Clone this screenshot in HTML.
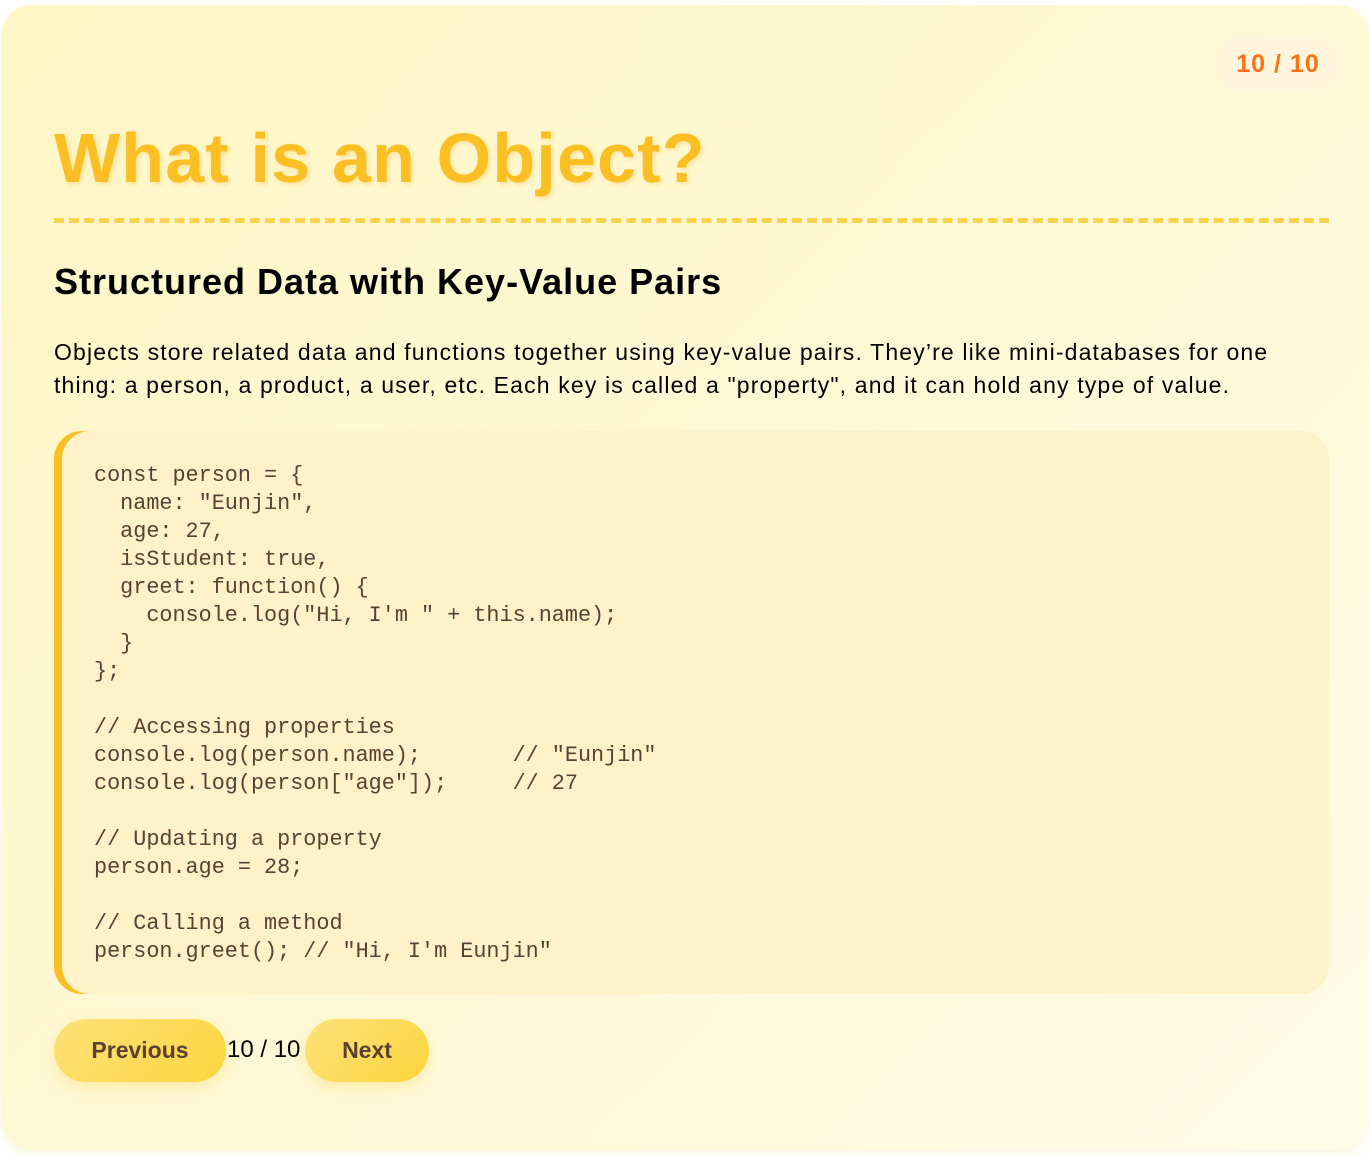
<!DOCTYPE html>
<html><head><meta charset="utf-8"><style>
html,body{margin:0;padding:0;width:1369px;height:1155px;background:#fff;overflow:hidden}
.card{position:absolute;left:2px;top:5px;width:1367px;height:1145px;border-radius:30px;background:linear-gradient(135deg,#fef6c4 0%,#fff9d9 60%,#fffbe6 100%);box-shadow:0 4px 10px rgba(240,220,150,.3)}
.badge{position:absolute;left:1216px;top:38px;width:124px;height:52px;border-radius:26px;background:#fff5dc;color:#f97316;font:bold 25px "Comic Sans MS","Liberation Sans",sans-serif;text-align:center;line-height:52px;letter-spacing:1px}
h1{position:absolute;left:54px;top:116px;margin:0;font:bold 70px/1.2 "Comic Sans MS","Liberation Sans",sans-serif;color:#fbbf24;text-shadow:2px 2px 4px rgba(240,180,40,.3);letter-spacing:1.2px}
.dash{position:absolute;left:54px;top:218px;width:1275px;height:0;border-top:5px dashed #fcd34d}
h2{position:absolute;left:54px;top:260px;margin:0;font:bold 36px/1.2 "Comic Sans MS","Liberation Sans",sans-serif;color:#000;letter-spacing:1px}
p{position:absolute;left:54px;top:336px;width:1300px;margin:0;font:23px/33px "Comic Sans MS","Liberation Sans",sans-serif;color:#000;letter-spacing:1.15px;white-space:nowrap}
.code{position:absolute;left:54px;top:431px;width:1275px;height:563px;border-radius:28px;background:#fff2c9;box-shadow:inset 8px 0 0 #fbbf24}
pre{position:absolute;left:94px;top:462px;margin:0;font:21.8px/28px "Liberation Mono",monospace;color:#5b4033}
.btn{position:absolute;top:1019px;height:63px;border-radius:32px;background:linear-gradient(135deg,#fde17a,#fcd53c);color:#5b4033;font:bold 23px/63px "Liberation Sans",sans-serif;text-align:center;box-shadow:0 6px 14px rgba(250,210,80,.35)}
.cnt{position:absolute;left:227px;top:1034px;font:24px/32px "Comic Sans MS","Liberation Sans",sans-serif;color:#000}
</style></head><body>
<div class="card"></div>
<div class="badge">10 / 10</div>
<h1>What is an Object?</h1>
<div class="dash"></div>
<h2>Structured Data with Key-Value Pairs</h2>
<p>Objects store related data and functions together using key-value pairs. They’re like mini-databases for one<br>thing: a person, a product, a user, etc. Each key is called a "property", and it can hold any type of value.</p>
<div class="code"></div>
<pre>const person = {
  name: "Eunjin",
  age: 27,
  isStudent: true,
  greet: function() {
    console.log("Hi, I'm " + this.name);
  }
};

// Accessing properties
console.log(person.name);       // "Eunjin"
console.log(person["age"]);     // 27

// Updating a property
person.age = 28;

// Calling a method
person.greet(); // "Hi, I'm Eunjin"</pre>
<div class="btn" style="left:54px;width:172px">Previous</div>
<div class="cnt">10 / 10</div>
<div class="btn" style="left:305px;width:124px">Next</div>
</body></html>
